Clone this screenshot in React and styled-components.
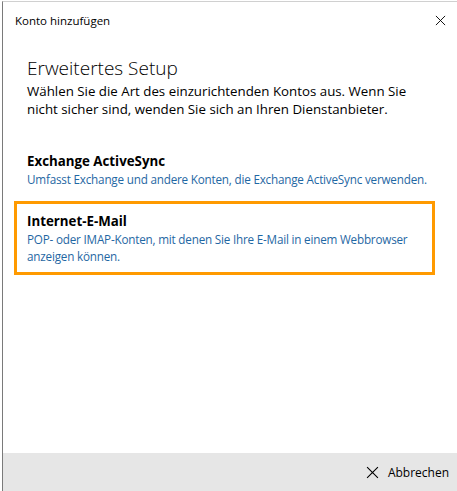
import React from "react";
import styled, { createGlobalStyle } from "styled-components";

const GlobalStyle = createGlobalStyle`
    html, body {
        margin: 0;
        padding: 0;
        background: #ffffff;
    }
    body {
        font-family: "Segoe UI", "Open Sans", "Noto Sans", sans-serif;
        color: #000;
    }
`;

const Window = styled.div`
    width: 457px;
    height: 491px;
    box-sizing: border-box;
    border-left: 1px solid #7a7a7a;
    border-top: 1px solid #d0d0d0;
    margin-left: 2px;
    margin-top: 1px;
    display: flex;
    flex-direction: column;
    background: #fff;
    overflow: hidden;
`;

const TitleBar = styled.div`
    height: 37px;
    display: flex;
    align-items: center;
    justify-content: space-between;
    padding: 0 13px 0 12px;
    font-size: 11.5px;
`;

const CloseButton = styled.span`
    display: flex;
    align-items: center;
`;

const Body = styled.div`
    flex: 1;
    padding: 16px 0 0 0;
`;

const Heading = styled.h1`
    margin: 0 0 0 24px;
    font-size: 19px;
    font-weight: 300;
    line-height: 26px;
`;

const Intro = styled.p`
    margin: 1px 0 0 24px;
    width: 410px;
    font-size: 13.3px;
    line-height: 18px;
`;

const Options = styled.div`
    margin-top: 23px;
    display: flex;
    flex-direction: column;
    gap: 3px;
`;

const Option = styled.div`
    margin: 0 24px 0 11px;
    padding: 8px 10px 7px 10px;
    border: 3px solid ${(p) => (p.selected ? "#ff9a00" : "transparent")};
`;

const OptionTitle = styled.div`
    font-size: 13.3px;
    font-weight: 700;
    line-height: 19px;
`;

const OptionText = styled.div`
    font-size: 11.7px;
    letter-spacing: -0.2px;
    line-height: 17px;
    color: #1f67a3;
    max-width: ${(p) => (p.nowrap ? "none" : "395px")};
    white-space: ${(p) => (p.nowrap ? "nowrap" : "normal")};
`;

const Footer = styled.div`
    height: 38px;
    background: #e6e6e6;
    display: flex;
    justify-content: flex-end;
    align-items: center;
    padding: 0 10px 0 0;
    font-size: 12px;
    margin-bottom: 1px;
`;

const CancelButton = styled.div`
    display: flex;
    align-items: center;
    gap: 9px;
`;

const Cross = ({ size = 12 }) => (
    <svg width={size} height={size} viewBox="0 0 12 12">
        <path d="M1 1 L11 11 M11 1 L1 11" stroke="#000" strokeWidth="1" fill="none" />
    </svg>
);

export default function App() {
    return (
        <>
            <GlobalStyle />
            <Window>
                <TitleBar>
                    <span>Konto hinzufügen</span>
                    <CloseButton>
                        <Cross size={11} />
                    </CloseButton>
                </TitleBar>
                <Body>
                    <Heading>Erweitertes Setup</Heading>
                    <Intro>
                        Wählen Sie die Art des einzurichtenden Kontos aus. Wenn Sie nicht sicher sind, wenden Sie sich an Ihren Dienstanbieter.
                    </Intro>
                    <Options>
                        <Option>
                            <OptionTitle>Exchange ActiveSync</OptionTitle>
                            <OptionText nowrap>
                                Umfasst Exchange und andere Konten, die Exchange ActiveSync verwenden.
                            </OptionText>
                        </Option>
                        <Option selected>
                            <OptionTitle>Internet-E-Mail</OptionTitle>
                            <OptionText>POP- oder IMAP-Konten, mit denen Sie Ihre E-Mail in einem Webbrowser anzeigen können.</OptionText>
                        </Option>
                    </Options>
                </Body>
                <Footer>
                    <CancelButton>
                        <Cross size={13} />
                        <span>Abbrechen</span>
                    </CancelButton>
                </Footer>
            </Window>
        </>
    );
}
